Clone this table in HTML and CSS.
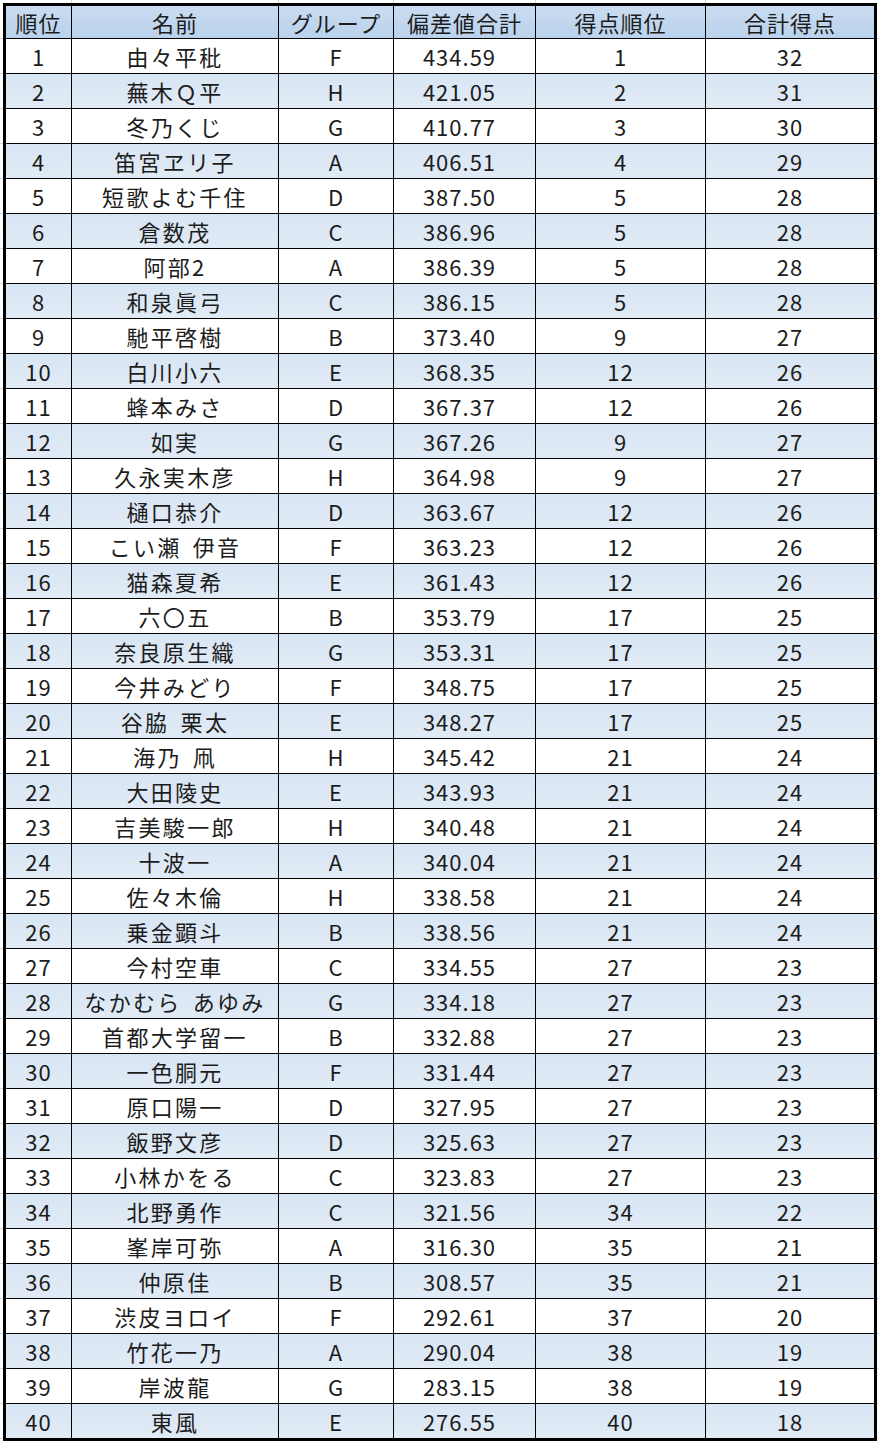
FILE: index.html
```html
<!DOCTYPE html>
<html lang="ja">
<head>
<meta charset="utf-8">
<title>順位表</title>
<link rel="stylesheet" href="styles.css">
</head>
<body>
<table class="rank">
<colgroup>
<col class="c-rank"><col class="c-name"><col class="c-group"><col class="c-score"><col class="c-pos"><col class="c-total">
</colgroup>
<thead>
<tr><th>順位</th><th>名前</th><th>グループ</th><th>偏差値合計</th><th>得点順位</th><th>合計得点</th></tr>
</thead>
<tbody>
<tr><td>1</td><td class="name">由々平秕</td><td>F</td><td class="score">434.59</td><td>1</td><td>32</td></tr>
<tr><td>2</td><td class="name">蕪木Ｑ平</td><td>H</td><td class="score">421.05</td><td>2</td><td>31</td></tr>
<tr><td>3</td><td class="name">冬乃くじ</td><td>G</td><td class="score">410.77</td><td>3</td><td>30</td></tr>
<tr><td>4</td><td class="name">笛宮ヱリ子</td><td>A</td><td class="score">406.51</td><td>4</td><td>29</td></tr>
<tr><td>5</td><td class="name">短歌よむ千住</td><td>D</td><td class="score">387.50</td><td>5</td><td>28</td></tr>
<tr><td>6</td><td class="name">倉数茂</td><td>C</td><td class="score">386.96</td><td>5</td><td>28</td></tr>
<tr><td>7</td><td class="name">阿部2</td><td>A</td><td class="score">386.39</td><td>5</td><td>28</td></tr>
<tr><td>8</td><td class="name">和泉眞弓</td><td>C</td><td class="score">386.15</td><td>5</td><td>28</td></tr>
<tr><td>9</td><td class="name">馳平啓樹</td><td>B</td><td class="score">373.40</td><td>9</td><td>27</td></tr>
<tr><td>10</td><td class="name">白川小六</td><td>E</td><td class="score">368.35</td><td>12</td><td>26</td></tr>
<tr><td>11</td><td class="name">蜂本みさ</td><td>D</td><td class="score">367.37</td><td>12</td><td>26</td></tr>
<tr><td>12</td><td class="name">如実</td><td>G</td><td class="score">367.26</td><td>9</td><td>27</td></tr>
<tr><td>13</td><td class="name">久永実木彦</td><td>H</td><td class="score">364.98</td><td>9</td><td>27</td></tr>
<tr><td>14</td><td class="name">樋口恭介</td><td>D</td><td class="score">363.67</td><td>12</td><td>26</td></tr>
<tr><td>15</td><td class="name">こい瀬 伊音</td><td>F</td><td class="score">363.23</td><td>12</td><td>26</td></tr>
<tr><td>16</td><td class="name">猫森夏希</td><td>E</td><td class="score">361.43</td><td>12</td><td>26</td></tr>
<tr><td>17</td><td class="name">六〇五</td><td>B</td><td class="score">353.79</td><td>17</td><td>25</td></tr>
<tr><td>18</td><td class="name">奈良原生織</td><td>G</td><td class="score">353.31</td><td>17</td><td>25</td></tr>
<tr><td>19</td><td class="name">今井みどり</td><td>F</td><td class="score">348.75</td><td>17</td><td>25</td></tr>
<tr><td>20</td><td class="name">谷脇 栗太</td><td>E</td><td class="score">348.27</td><td>17</td><td>25</td></tr>
<tr><td>21</td><td class="name">海乃 凧</td><td>H</td><td class="score">345.42</td><td>21</td><td>24</td></tr>
<tr><td>22</td><td class="name">大田陵史</td><td>E</td><td class="score">343.93</td><td>21</td><td>24</td></tr>
<tr><td>23</td><td class="name">吉美駿一郎</td><td>H</td><td class="score">340.48</td><td>21</td><td>24</td></tr>
<tr><td>24</td><td class="name">十波一</td><td>A</td><td class="score">340.04</td><td>21</td><td>24</td></tr>
<tr><td>25</td><td class="name">佐々木倫</td><td>H</td><td class="score">338.58</td><td>21</td><td>24</td></tr>
<tr><td>26</td><td class="name">乗金顕斗</td><td>B</td><td class="score">338.56</td><td>21</td><td>24</td></tr>
<tr><td>27</td><td class="name">今村空車</td><td>C</td><td class="score">334.55</td><td>27</td><td>23</td></tr>
<tr><td>28</td><td class="name">なかむら あゆみ</td><td>G</td><td class="score">334.18</td><td>27</td><td>23</td></tr>
<tr><td>29</td><td class="name">首都大学留一</td><td>B</td><td class="score">332.88</td><td>27</td><td>23</td></tr>
<tr><td>30</td><td class="name">一色胴元</td><td>F</td><td class="score">331.44</td><td>27</td><td>23</td></tr>
<tr><td>31</td><td class="name">原口陽一</td><td>D</td><td class="score">327.95</td><td>27</td><td>23</td></tr>
<tr><td>32</td><td class="name">飯野文彦</td><td>D</td><td class="score">325.63</td><td>27</td><td>23</td></tr>
<tr><td>33</td><td class="name">小林かをる</td><td>C</td><td class="score">323.83</td><td>27</td><td>23</td></tr>
<tr><td>34</td><td class="name">北野勇作</td><td>C</td><td class="score">321.56</td><td>34</td><td>22</td></tr>
<tr><td>35</td><td class="name">峯岸可弥</td><td>A</td><td class="score">316.30</td><td>35</td><td>21</td></tr>
<tr><td>36</td><td class="name">仲原佳</td><td>B</td><td class="score">308.57</td><td>35</td><td>21</td></tr>
<tr><td>37</td><td class="name">渋皮ヨロイ</td><td>F</td><td class="score">292.61</td><td>37</td><td>20</td></tr>
<tr><td>38</td><td class="name">竹花一乃</td><td>A</td><td class="score">290.04</td><td>38</td><td>19</td></tr>
<tr><td>39</td><td class="name">岸波龍</td><td>G</td><td class="score">283.15</td><td>38</td><td>19</td></tr>
<tr><td>40</td><td class="name">東風</td><td>E</td><td class="score">276.55</td><td>40</td><td>18</td></tr>
</tbody>
</table>
</body>
</html>
```

FILE: styles.css
```css
html {
  background-color: #ffffff;
  background-image:
    linear-gradient(#d9d9d9, #d9d9d9),
    linear-gradient(#d9d9d9, #d9d9d9),
    linear-gradient(#d9d9d9, #d9d9d9),
    linear-gradient(#d9d9d9, #d9d9d9),
    linear-gradient(#d9d9d9, #d9d9d9),
    repeating-linear-gradient(to bottom, transparent 0, transparent 34px, #d9d9d9 34px, #d9d9d9 35px);
  background-size: 1px 100%, 1px 100%, 1px 100%, 1px 100%, 1px 100%, 100% 100%;
  background-position: 71px 0, 278px 0, 393px 0, 535px 0, 705px 0, 0 4px;
  background-repeat: no-repeat, no-repeat, no-repeat, no-repeat, no-repeat, repeat;
}

body {
  margin: 0;
  padding: 3px 0 0 3px;
  font-family: "Noto Sans CJK JP", "Noto Sans", sans-serif;
  color: #1c1c1c;
}

.rank {
  width: 874px;
  table-layout: fixed;
  border-collapse: separate;
  border-spacing: 1px;
  border: 2px solid #000;
  background: #000;
}

.c-rank { width: 65px; }
.c-name { width: 206px; }
.c-group { width: 114px; }
.c-score { width: 141px; }
.c-pos { width: 169px; }
.c-total { width: 168px; }

.rank th,
.rank td {
  padding: 0;
  text-align: center;
  vertical-align: middle;
  font-size: 22px;
  font-weight: 400;
  line-height: 1;
  letter-spacing: 1px;
  white-space: nowrap;
  overflow: hidden;
}

.rank th {
  height: 32px;
  background: linear-gradient(#cadcf1, #bad2ec);
}

.rank td {
  height: 34px;
  background: #ffffff;
}

.rank td.name {
  letter-spacing: 2.3px;
  word-spacing: 4px;
}

.rank td.score {
  padding-right: 10px;
}

.rank tbody tr:nth-child(even) td {
  background: linear-gradient(#d8e5f3, #e1ebf6);
}
```
